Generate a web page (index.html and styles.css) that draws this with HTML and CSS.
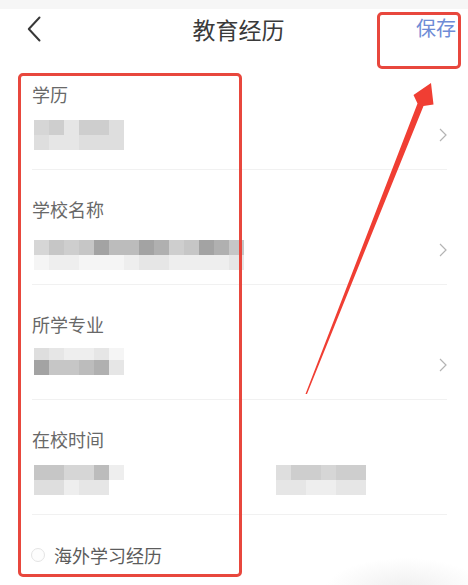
FILE: index.html
```html
<!DOCTYPE html>
<html lang="zh-CN">
<head>
<meta charset="utf-8">
<title>教育经历</title>
<link rel="stylesheet" href="styles.css">
</head>
<body>
<div class="page">
  <div class="topband"></div>
  <header class="header">
    <div class="back">
      <svg width="14" height="26" viewBox="0 0 14 26"><polyline points="12.5,1.5 1.8,13 12.5,24.5" fill="none" stroke="#383838" stroke-width="2" stroke-linecap="round" stroke-linejoin="round"/></svg>
    </div>
    <h1 class="title">教育经历</h1>
    <div class="save">保存</div>
  </header>

  <main class="list">
    <section class="row">
      <div class="field">
        <div class="label">学历</div>
        <div class="mosaic m6">
          <span class="k4"></span><span class="k5"></span><span class="k2"></span><span class="k5"></span><span class="k5"></span><span class="k3"></span>
          <span class="k3"></span><span class="k2"></span><span class="k2"></span><span class="k3"></span><span class="k3"></span><span class="k3"></span>
        </div>
      </div>
      <svg class="chev" width="8" height="14" viewBox="0 0 8 14"><polyline points="1,1 7,7 1,13" fill="none" stroke="#b4b4b4" stroke-width="1.2"/></svg>
    </section>

    <section class="row">
      <div class="field">
        <div class="label">学校名称</div>
        <div class="mosaic m14 lower">
          <span class="k4"></span><span class="k6"></span><span class="k5"></span><span class="k6"></span><span class="k9"></span><span class="k7"></span><span class="k7"></span><span class="k9"></span><span class="k8"></span><span class="k5"></span><span class="k6"></span><span class="k9"></span><span class="k8"></span><span class="k6"></span>
          <span class="k0"></span><span class="k1"></span><span class="k1"></span><span class="k0"></span><span class="k0"></span><span class="k0"></span><span class="k1"></span><span class="k2"></span><span class="k2"></span><span class="k1"></span><span class="k1"></span><span class="k1"></span><span class="k1"></span><span class="k2"></span>
        </div>
      </div>
      <svg class="chev" width="8" height="14" viewBox="0 0 8 14"><polyline points="1,1 7,7 1,13" fill="none" stroke="#b4b4b4" stroke-width="1.2"/></svg>
    </section>

    <section class="row">
      <div class="field">
        <div class="label">所学专业</div>
        <div class="mosaic m6 tight">
          <span class="k3"></span><span class="k2"></span><span class="k1"></span><span class="k1"></span><span class="k2"></span><span class="k0"></span>
          <span class="k9"></span><span class="k6"></span><span class="k6"></span><span class="k7"></span><span class="k8"></span><span class="k2"></span>
        </div>
      </div>
      <svg class="chev" width="8" height="14" viewBox="0 0 8 14"><polyline points="1,1 7,7 1,13" fill="none" stroke="#b4b4b4" stroke-width="1.2"/></svg>
    </section>

    <section class="row">
      <div class="field">
        <div class="label">在校时间</div>
        <div class="dates">
          <div class="mosaic m6">
            <span class="k6"></span><span class="k6"></span><span class="k4"></span><span class="k4"></span><span class="k7"></span><span class="k1"></span>
            <span class="k3"></span><span class="k3"></span><span class="k1"></span><span class="k2"></span><span class="k2"></span><span class="kw"></span>
          </div>
          <div class="mosaic m6">
            <span class="k3"></span><span class="k5"></span><span class="k5"></span><span class="k4"></span><span class="k5"></span><span class="k5"></span>
            <span class="k2"></span><span class="k2"></span><span class="k1"></span><span class="k1"></span><span class="k2"></span><span class="k2"></span>
          </div>
        </div>
      </div>
    </section>

    <section class="abroad">
      <span class="radio"></span>
      <span class="abroad-text">海外学习经历</span>
    </section>
  </main>

  <div class="mark mark-list"></div>
  <div class="mark mark-save"></div>
  <svg class="arrow" width="468" height="585" viewBox="0 0 468 585">
    <polygon points="305.5,394 417.5,103.5 413.5,95 431,83 433.5,104.5 423.5,106 307,394" fill="#f03e33"/>
  </svg>
</div>
</body>
</html>
```

FILE: styles.css
```css
* { box-sizing: border-box; }

html, body {
  margin: 0;
  padding: 0;
  background: #ffffff;
}

body {
  font-family: "Noto Sans CJK SC", "Noto Sans", sans-serif;
  color: #333;
}

.page {
  position: relative;
  width: 468px;
  height: 585px;
  overflow: hidden;
  background:
    radial-gradient(ellipse 80px 32px at 405px 590px, #efefef, rgba(255,255,255,0)),
    #ffffff;
}

.topband {
  height: 9px;
  background: #f6f6f6;
}

.header {
  height: 40px;
  display: grid;
  grid-template-columns: 1fr auto 1fr;
  align-items: center;
}

.back {
  padding-left: 27px;
  display: flex;
  align-items: center;
  margin-top: -1px;
}

.title {
  margin: 0 0 0 9px;
  font-size: 23px;
  font-weight: 400;
  line-height: 30px;
  color: #3a3a3a;
}

.save {
  justify-self: end;
  padding-right: 12px;
  font-size: 20px;
  line-height: 26px;
  color: #6e8cd6;
  margin-top: -3px;
}

.list {
  margin-top: 6px;
}

.row {
  height: 115px;
  margin-left: 32px;
  width: 415px;
  border-bottom: 1px solid #f1f1f1;
  display: flex;
  justify-content: space-between;
}

.field {
  padding-top: 27px;
}

.label {
  font-size: 18px;
  line-height: 24px;
  color: #686868;
}

.mosaic {
  display: grid;
  grid-auto-rows: 15px;
  margin-top: 14px;
  margin-left: 2px;
  width: max-content;
  filter: blur(0.7px);
}

.mosaic.m6 { grid-template-columns: repeat(6, 15px); }
.mosaic.m14 { grid-template-columns: repeat(14, 15px); }
.mosaic.lower { margin-top: 19px; }
.mosaic.tight { margin-top: 12px; grid-template-rows: 12px 15px; }

.dates {
  display: flex;
  gap: 150px;
}

.k0 { background: #f5f5f5; }
.k1 { background: #eeeeee; }
.k2 { background: #e6e6e6; }
.k3 { background: #dedede; }
.k4 { background: #d6d6d6; }
.k5 { background: #cecece; }
.k6 { background: #c6c6c6; }
.k7 { background: #bcbcbc; }
.k8 { background: #b0b0b0; }
.k9 { background: #a3a3a3; }
.kw { background: #ffffff; }

.chev {
  align-self: flex-end;
  margin-bottom: 27px;
}

.abroad {
  margin-left: 31px;
  padding-top: 28px;
  display: flex;
  align-items: center;
  gap: 9px;
}

.radio {
  width: 14px;
  height: 14px;
  border-radius: 50%;
  border: 1px solid #e4e4e4;
  background: #fdfdfd;
}

.abroad-text {
  font-size: 18px;
  line-height: 24px;
  color: #5c5c5c;
}

.mark {
  position: absolute;
  border: 3px solid #e8473d;
  border-radius: 5px;
  pointer-events: none;
}

.mark-list {
  left: 18px;
  top: 73px;
  width: 224px;
  height: 504px;
}

.mark-save {
  left: 377px;
  top: 12px;
  width: 84px;
  height: 57px;
}

.arrow {
  position: absolute;
  left: 0;
  top: 0;
  pointer-events: none;
}
```
